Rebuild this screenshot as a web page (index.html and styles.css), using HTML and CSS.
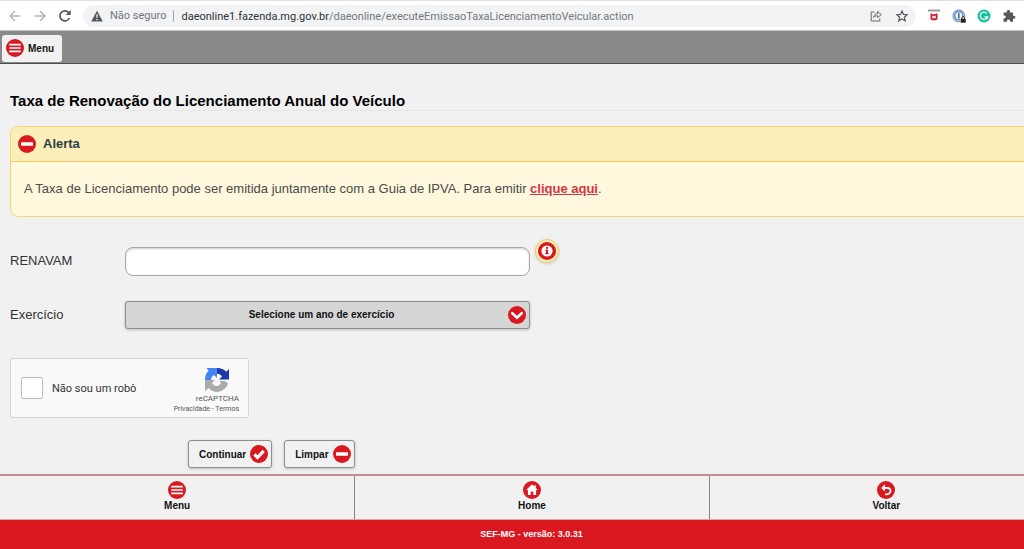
FILE: index.html
```html
<!DOCTYPE html>
<html lang="pt-BR">
<head>
<meta charset="utf-8">
<meta name="viewport" content="width=device-width, initial-scale=1">
<title>Taxa de Renovação do Licenciamento Anual do Veículo</title>
<link rel="stylesheet" href="styles.css">
</head>
<body>
<svg class="defs" aria-hidden="true">
  <symbol id="menu" viewBox="0 0 18 18"><circle cx="9" cy="9" r="9" fill="#d9191f"/><path d="M3.2 5.7h11.6M3.2 9h11.6M3.2 12.3h11.6" stroke="#fff" stroke-width="1.7"/></symbol>
  <symbol id="minus" viewBox="0 0 18 18"><circle cx="9" cy="9" r="9" fill="#d9191f"/><rect x="3" y="7.3" width="12" height="3.4" rx=".5" fill="#fff"/></symbol>
  <symbol id="check" viewBox="0 0 18 18"><circle cx="9" cy="9" r="9" fill="#d9191f"/><path d="M4.4 9.3l3.1 3.2 6.2-6.6" fill="none" stroke="#fff" stroke-width="3.2"/></symbol>
  <symbol id="down" viewBox="0 0 18 18"><circle cx="9" cy="9" r="9" fill="#d9191f"/><path d="M4.3 7.2L9 11.7l4.7-4.5" fill="none" stroke="#fff" stroke-width="2.6" stroke-linecap="round"/></symbol>
  <symbol id="home" viewBox="0 0 18 18"><circle cx="9" cy="9" r="9" fill="#d9191f"/><path d="M9 3.200L3.200 9h1.700v5h2.800v-3.600h2.600V14h2.800V9h1.700L12.800 7V4.200h-1.600v1.200z" fill="#fff"/></symbol>
  <symbol id="back" viewBox="0 0 18 18"><circle cx="9" cy="9" r="9" fill="#d9191f"/><path d="M7 7h3.600c4.200.2 4 5.800-.9 6.300H8.200" fill="none" stroke="#fff" stroke-width="1.800"/><path d="M4.200 7l3.800-3.700v7.200z" fill="#fff"/></symbol>
</svg>

<div class="toolbar">
  <button class="tool" type="button" aria-label="Recuar"><svg width="14" height="14" viewBox="0 0 14 14"><path d="M12.500 7H2M7 2L2 7l5 5" class="faint"/></svg></button>
  <button class="tool" type="button" aria-label="Avançar"><svg width="14" height="14" viewBox="0 0 14 14"><path d="M1.500 7H12M7 2l5 5-5 5" class="faint"/></svg></button>
  <button class="tool" type="button" aria-label="Recarregar"><svg width="14" height="14" viewBox="0 0 14 14"><path d="M11.500 9A5 5 0 1 1 11 4" fill="none" stroke="#55585c" stroke-width="1.700"/><path d="M12.700 1v5H7.700z" fill="#55585c"/></svg></button>
  <div class="address">
    <svg width="12" height="12" viewBox="0 0 12 12"><path d="M6 .8L11.800 11.500H.2z" fill="#55585c"/><path d="M6 4.300v3.500M6 8.900v1.400" stroke="#f1f3f4" stroke-width="1.300"/></svg>
    <span class="insecure">Não seguro</span>
    <span class="url"><span class="host">daeonline1.fazenda.mg.gov.br</span>/daeonline/executeEmissaoTaxaLicenciamentoVeicular.action</span>
    <button class="tool" type="button" aria-label="Compartilhar"><svg width="12" height="12" viewBox="0 0 12 12" fill="none" stroke="#66696d" stroke-width="1"><path d="M4.500 2H1.200v9h8.600V8.300"/><path d="M3.600 7.500c.4-2.600 1.900-3.900 4-4V1.500L11.300 4.600 7.600 7.500V5.700c-1.700 0-3 .5-4 1.800z"/></svg></button>
    <button class="tool" type="button" aria-label="Adicionar aos favoritos"><svg width="12" height="12" viewBox="0 0 12 12"><path d="M6 1l1.500 3.400 3.700.3-2.800 2.500.8 3.600L6 8.900l-3.200 1.900.8-3.600L.8 4.700l3.700-.3z" fill="none" stroke="#55585c" stroke-width="1.200"/></svg></button>
  </div>
  <div class="extensions">
    <button class="tool" type="button" aria-label="Antivírus"><svg width="14" height="14" viewBox="0 0 14 14"><path d="M1 1.500h12" stroke="#999" stroke-width="2"/><path d="M3.500 4.300l3.500 1.200 3.500-1.200v6.200L7 11.500l-3.500-1z" fill="#c8202f"/><path d="M5.300 6.500L7 7.500l1.700-1v2.700H5.300z" fill="#fff"/></svg></button>
    <button class="tool" type="button" aria-label="Senhas"><svg width="14" height="14" viewBox="0 0 14 14"><circle cx="6.800" cy="6.800" r="5.900" fill="#fff" stroke="#929aa3" stroke-width="1.200"/><circle cx="6.800" cy="6.800" r="4.200" fill="#edf6ff" stroke="#4a93e8" stroke-width="1.500"/><path d="M6.800 4v5.400" stroke="#53616e" stroke-width="1.500"/><path d="M8 8.500h6V14H8z" fill="#fff"/><path d="M8.600 9.800h5.100v3.900H8.600z" fill="#222"/><path d="M9.800 10V8.800c0-1.500 2.700-1.500 2.700 0V10" fill="none" stroke="#222"/></svg></button>
    <button class="tool" type="button" aria-label="Corretor"><svg width="14" height="14" viewBox="0 0 14 14"><circle cx="7" cy="7" r="6.500" fill="#15c39a"/><path d="M9.900 4.500A3.700 3.700 0 1 0 10.500 8H7.600M10.500 8v2" fill="none" stroke="#fff" stroke-width="1.300"/></svg></button>
    <button class="tool" type="button" aria-label="Extensões"><svg width="14" height="14" viewBox="0 0 14 14"><path d="M1.500 3.500h3.300c-.8-3.400 4-3.400 3.200 0h3v3.200c3.200-.7 3.200 3.800 0 3.100v3H8.200c.3-3.200-3.700-3.200-3.300 0H1.500V9.600c3-.1 3-3.200 0-3.300z" fill="#55585c"/></svg></button>
  </div>
</div>

<div class="page">
  <header class="topbar">
    <button class="menu-button" type="button"><svg class="icon"><use href="#menu"/></svg>Menu</button>
  </header>

  <main class="content">
    <h1 class="title">Taxa de Renovação do Licenciamento Anual do Veículo</h1>

    <section class="alert">
      <h2 class="alert-head"><svg class="icon"><use href="#minus"/></svg>Alerta</h2>
      <p class="alert-body">A Taxa de Licenciamento pode ser emitida juntamente com a Guia de IPVA. Para emitir <a class="alert-link" href="#ipva">clique aqui</a>.</p>
    </section>

    <form class="form">
      <div class="row">
        <label class="label" for="renavam">RENAVAM</label>
        <input class="text" id="renavam" type="text">
        <button class="info" type="button" aria-label="Ajuda"><svg width="18" height="18" viewBox="0 0 18 18"><circle cx="9" cy="9" r="9" fill="#d9191f"/><circle cx="9" cy="9" r="5.600" fill="#fff"/><path d="M8 5h2v1.700H8zM7.400 7.500H10v3.600h.7v1.200H7.300v-1.200H8V8.700h-.6z" fill="#d9191f"/></svg></button>
      </div>
      <div class="row">
        <label class="label" for="year">Exercício</label>
        <div class="select-wrap">
          <select class="select" id="year"><option>Selecione um ano de exercício</option></select>
          <svg class="icon select-icon"><use href="#down"/></svg>
        </div>
      </div>
      <div class="captcha">
        <input class="captcha-box" id="robot" type="checkbox">
        <label class="captcha-label" for="robot">Não sou um robô</label>
        <div class="captcha-brand">
          <svg width="26" height="26" viewBox="0 0 26 26"><path d="M13 1c4 0 7 1.200 9.200 3.800L25 2v10.500H15l3-3C16.600 7.500 15 6.800 13 6.800z" fill="#1c3aa9"/><path d="M13 1v10L10 8c-2 1.300-3 2.700-3 5H1C1 9 2.300 6 4.600 3.800L2.500 1z" fill="#4285f4"/><path d="M1 13h10l-3 3c2.500 4 6.600 4.200 9 0l-2-2h6l3 2.500c-3.700 9.300-13.500 11-19.200 4.500L1 24z" fill="#ababab"/></svg>
          <span class="captcha-name">reCAPTCHA</span>
          <span class="captcha-terms"><a href="#privacidade">Privacidade</a> - <a href="#termos">Termos</a></span>
        </div>
      </div>
      <div class="actions">
        <button class="button" type="submit">Continuar<svg class="icon"><use href="#check"/></svg></button>
        <button class="button" type="reset">Limpar<svg class="icon"><use href="#minus"/></svg></button>
      </div>
    </form>
  </main>

  <nav class="tabs">
    <a class="tab" href="#menu-principal"><svg class="icon"><use href="#menu"/></svg>Menu</a>
    <a class="tab" href="#inicio"><svg class="icon"><use href="#home"/></svg>Home</a>
    <a class="tab" href="#voltar"><svg class="icon"><use href="#back"/></svg>Voltar</a>
  </nav>
  <footer class="version">SEF-MG - versão: 3.0.31</footer>
</div>
</body>
</html>
```
FILE: styles.css
```css
* { box-sizing: border-box; }

body {
  margin: 0;
  min-height: 100vh;
  display: flex;
  flex-direction: column;
  overflow-x: hidden;
  background: #f1f1f1;
  color: #333;
  font-family: "Liberation Sans", Arial, sans-serif;
  font-size: 13px;
}

button, input, select { font-family: inherit; margin: 0; }
.defs { display: none; }
.icon { width: 18px; height: 18px; flex: none; }

/* Browser bar */
.toolbar {
  display: flex;
  align-items: center;
  height: 31px;
  padding: 1px 8px 0;
  gap: 11px;
  background: #fff;
  border-top: 1px solid #dee1e6;
  border-bottom: 1px solid #c4c4c4;
  font-family: Roboto, "Noto Sans", sans-serif;
  font-size: 11px;
}
.tool { display: flex; padding: 0; border: 0; background: none; }
.faint { fill: none; stroke: #b5b7b9; stroke-width: 1.5; }
.address {
  flex: 1;
  display: flex;
  align-items: center;
  height: 22px;
  padding: 0 8px;
  border-radius: 11px;
  background: #f1f3f4;
  color: #74777b;
  white-space: nowrap;
}
.insecure { margin-left: 7px; padding-right: 7px; border-right: 1px solid #a5a7aa; line-height: 12px; }
.url { flex: 1; margin-left: 7px; }
.host { color: #303236; }
.address .tool { margin-left: 14px; }
.extensions { display: flex; gap: 11px; }

/* Page is a little wider than the window */
.page { flex: 1; display: flex; flex-direction: column; margin-right: -39px; }

.topbar { padding: 4px 2px 1px; background: #898989; border-bottom: 1px solid #4d4d4d; }
.menu-button {
  display: flex;
  align-items: center;
  gap: 4px;
  width: 60px;
  height: 27px;
  padding: 0 4px 1px;
  border: 0;
  border-radius: 3px;
  background: #f1f1f1;
  color: #111;
  font-size: 10px;
  font-weight: bold;
}

.content { flex: 1; padding: 28px 10px 6px; }
.title {
  margin: 0 0 15px;
  padding-bottom: 1px;
  border-bottom: 1px solid #e6e6e6;
  color: #000;
  font-size: 15px;
  line-height: 17px;
}

.alert { border: 1px solid #f7d56e; border-radius: 8px; background: #fff8dd; overflow: hidden; }
.alert-head {
  display: flex;
  align-items: center;
  gap: 7px;
  height: 35px;
  margin: 0;
  padding: 0 7px 1px;
  background: #fbeeb8;
  border-bottom: 1px solid #f0cd62;
  color: #2f3e46;
  font-size: 13px;
}
.alert-body { margin: 0; padding: 19px 13px; color: #4b4b4b; line-height: 16px; }
.alert-link { color: #d63345; font-weight: bold; }

.form { padding-top: 30px; }
.row { display: flex; align-items: center; height: 28px; margin-bottom: 26px; }
.label { flex: none; width: 115px; padding-bottom: 2px; color: #333; }
.text {
  width: 405px;
  height: 29px;
  padding: 4px 8px;
  border: 1px solid #a9a9a9;
  border-radius: 8px;
  background: #fff;
  box-shadow: inset 0 1px 2px #ccc;
}
.info {
  display: flex;
  align-self: flex-start;
  margin: -8px 0 0 5px;
  padding: 2px;
  border: 1px solid #f0cd62;
  border-radius: 50%;
  background: #fbeeb8;
  box-shadow: 0 1px 3px #ccc;
}
.select-wrap { position: relative; width: 405px; }
.select {
  display: block;
  width: 100%;
  height: 28px;
  padding: 0 12px 2px 0;
  appearance: none;
  border: 1px solid #8d8d8d;
  border-radius: 3px;
  background: #d6d6d6;
  box-shadow: 0 1px 3px #bbb;
  color: #111;
  font-size: 10px;
  font-weight: bold;
  text-align: center;
  text-align-last: center;
}
.select-icon { position: absolute; right: 4px; top: 5px; pointer-events: none; }

.captcha {
  display: flex;
  align-items: center;
  width: 239px;
  height: 60px;
  margin-top: 29px;
  padding: 0 9px 0 10px;
  border: 1px solid #d6d6d6;
  border-radius: 2px;
  background: #f9f9f9;
  font-family: Roboto, sans-serif;
}
.captcha-box {
  appearance: none;
  width: 22px;
  height: 22px;
  margin-right: 9px;
  border: 1px solid #bdbdbd;
  border-radius: 2px;
  background: #fff;
}
.captcha-label { flex: 1; font-size: 11px; }
.captcha-brand { display: flex; flex-direction: column; align-items: flex-end; padding-top: 4px; color: #555; }
.captcha-brand svg { margin-right: 9px; }
.captcha-name { font-size: 8px; line-height: 11px; }
.captcha-terms { font-size: 7px; line-height: 10px; }
.captcha-terms a { color: inherit; text-decoration: none; }

.actions { display: flex; gap: 12px; margin-top: 22px; padding-left: 178px; }
.button {
  display: flex;
  align-items: center;
  gap: 4px;
  height: 28px;
  padding: 0 3px 0 10px;
  border: 1px solid #8d8d8d;
  border-radius: 3px;
  background: #f1f1f1;
  box-shadow: 0 1px 3px #bbb;
  color: #111;
  font-size: 10px;
  font-weight: bold;
}

.tabs {
  display: grid;
  grid-template-columns: repeat(3, 1fr);
  border-top: 2px solid #c48a8d;
  border-bottom: 1px solid #dba5a7;
}
.tab {
  display: flex;
  flex-direction: column;
  align-items: center;
  height: 43px;
  padding-top: 5px;
  color: #111;
  font-size: 10px;
  font-weight: bold;
  line-height: 14px;
  text-decoration: none;
}
.tab + .tab { border-left: 1px solid #888; }
.version {
  background: #d9191f;
  color: #fff;
  font-size: 9px;
  font-weight: bold;
  line-height: 29px;
  text-align: center;
}
```
